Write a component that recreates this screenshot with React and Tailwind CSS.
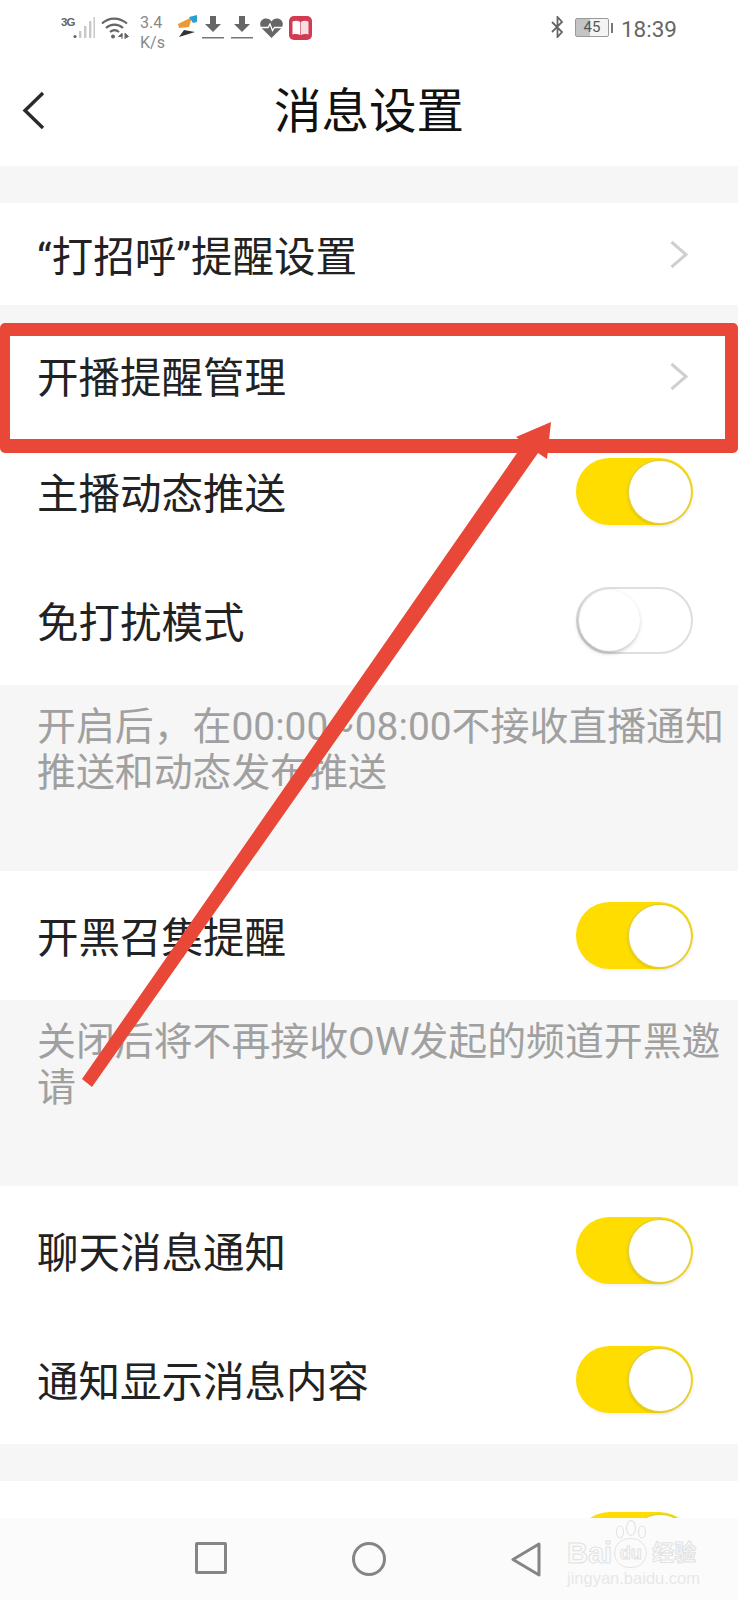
import React from "react";

const CJK = "font-['Roboto','Noto_Sans_CJK_SC',sans-serif]";

function Chevron() {
  return (
    <svg width="18" height="29" viewBox="0 0 18 29" fill="none" className="shrink-0">
      <path d="M1.5 2 L16 14.5 L1.5 27" stroke="#cfcfcf" strokeWidth="3" />
    </svg>
  );
}

function Toggle({ on = true }) {
  if (on) {
    return (
      <div className="flex h-[67px] w-[117px] shrink-0 items-center justify-end rounded-full bg-[#ffdd00] pr-[2px] shadow-[1px_2px_3px_rgba(0,0,0,0.06)]">
        <div className="h-[62px] w-[62px] rounded-full bg-white shadow-[0_0_0_1.5px_#e4cf35,-1px_2px_3px_rgba(120,100,0,0.25)]" />
      </div>
    );
  }
  return (
    <div className="flex h-[67px] w-[117px] shrink-0 items-center justify-start rounded-full border-2 border-[#dedede] bg-white pl-[1px]">
      <div className="h-[61px] w-[61px] rounded-full bg-white shadow-[-1px_2px_4px_rgba(0,0,0,0.28)]" />
    </div>
  );
}

function NavRow({ label, first }) {
  return (
    <div className="flex h-[102px] items-center justify-between bg-white pl-[37px] pr-[50px]">
      <span className={`text-[41.5px] leading-none text-[#222] ${first ? "pt-[8px]" : "pt-[6px]"}`}>{label}</span>
      <Chevron />
    </div>
  );
}

function SwitchRow({ label, on }) {
  return (
    <div className="flex h-[129px] items-center justify-between bg-white pl-[37px] pr-[45px]">
      <span className="pt-[6px] text-[41.5px] leading-none text-[#222]">{label}</span>
      <Toggle on={on} />
    </div>
  );
}

function Note({ children }) {
  return (
    <div className="h-[186px] bg-[#f6f6f6] pl-[37px] pr-[10px] pt-[19px] text-[38.9px] leading-[46px] text-[#a0a0a0]">
      {children}
    </div>
  );
}

function Download() {
  return (
    <svg width="22" height="24" viewBox="0 0 22 24" className="shrink-0">
      <path d="M8 0h6v8h5l-8 8-8-8h5z" fill="#666" />
      <rect x="0" y="21" width="22" height="1.5" fill="#777" />
    </svg>
  );
}

function StatusBar() {
  return (
    <div className="flex h-[60px] items-start pl-[61px] pr-[61px] pt-[13px] text-[#666]">
      <span className="mt-[3px] w-[12px] text-[11.5px] font-bold leading-[12px] tracking-[-0.8px] font-['Liberation_Sans',sans-serif]">3G</span>
      <svg width="22" height="24" viewBox="0 0 22 24" className="mt-[3px] shrink-0">
        <circle cx="2" cy="20.5" r="1.6" fill="#666" />
        <rect x="6" y="15" width="2.4" height="7" fill="#c8c8c8" />
        <rect x="11" y="10" width="2.4" height="12" fill="#c8c8c8" />
        <rect x="16" y="5" width="2.4" height="17" fill="#c8c8c8" />
        <rect x="20.5" y="1" width="1.5" height="21" fill="#c8c8c8" />
      </svg>
      <svg width="28" height="24" viewBox="0 0 28 24" fill="none" className="ml-[6px] mt-[4px] shrink-0">
        <path d="M1 6.5 C8 0 18 0 26 6.5" stroke="#666" strokeWidth="2.2" />
        <path d="M5 11 C10 6.5 17 6.5 22 11" stroke="#666" strokeWidth="2.2" />
        <path d="M9 15 C12 12.5 15 12.5 18 15" stroke="#666" strokeWidth="2.2" />
        <circle cx="12" cy="19.5" r="2" fill="#666" />
        <path d="M21 16.5 L17.5 19.5 L21 19.5 Z M21 16.5 V22" stroke="#666" strokeWidth="1" fill="#666" />
        <path d="M24 16 V22 M24.5 16.5 L27.5 19.5 L24.5 21 Z" stroke="#666" strokeWidth="1" fill="#666" />
      </svg>
      <div className="ml-[11px] flex w-[24px] shrink-0 flex-col text-[16px] leading-[20px] font-['Roboto',sans-serif] text-[#888]">
        <span>3.4</span>
        <span>K/s</span>
      </div>
      <svg width="20" height="24" viewBox="0 0 20 24" className="ml-[14px] mt-[2px] shrink-0">
        <path d="M0 9 L14 2 L11 12 L1 13 Z" fill="#ee9a33" />
        <path d="M11 2 L19 0 L19 7 L15 8 Z" fill="#2a9fd6" />
        <path d="M1 22 L6 15 L17 17 Z" fill="#333" />
      </svg>
      <div className="ml-[4px] mt-[3px] flex gap-[7px]">
        <Download />
        <Download />
      </div>
      <svg width="23" height="20" viewBox="0 0 23 20" className="ml-[7px] mt-[5px] shrink-0">
        <path d="M11.5 20 L1.5 10 C-1.5 6 1 0.5 6 0.5 C8.5 0.5 10.3 1.8 11.5 3.5 C12.7 1.8 14.5 0.5 17 0.5 C22 0.5 24.5 6 21.5 10 Z" fill="#666" />
        <path d="M1 9.5 H8 L10 6 L12.5 12.5 L14.5 9.5 H22" fill="none" stroke="#fff" strokeWidth="1.3" />
      </svg>
      <svg width="23" height="24" viewBox="0 0 23 24" className="ml-[6px] mt-[3px] shrink-0">
        <rect x="0" y="0" width="23" height="24" rx="5" fill="#d23c52" />
        <path d="M3.5 5.5 C6 4.5 9 4.5 11.2 6 V19 C9 17.8 6 17.8 3.5 18.5 Z" fill="#fff" />
        <path d="M19.5 5.5 C17 4.5 14 4.5 11.8 6 V19 C14 17.8 17 17.8 19.5 18.5 Z" fill="#f6dfe2" />
      </svg>
      <div className="flex-1" />
      <svg width="13" height="22" viewBox="0 0 13 22" fill="none" className="mt-[3px] shrink-0">
        <path d="M1 6 L11 16 L6.5 21 V1 L11 6 L1 16" stroke="#666" strokeWidth="1.8" />
      </svg>
      <div className="ml-[11px] mt-[5px] flex h-[19px] w-[34px] shrink-0 items-center justify-center rounded-[2px] border border-[#999] bg-[linear-gradient(90deg,#c4c4c4_0_45%,#f4f4f4_45%)] text-[15px] leading-none font-['Roboto',sans-serif] text-[#555]">
        45
      </div>
      <div className="ml-[2px] mt-[10px] h-[10px] w-[2px] shrink-0 bg-[#777]" />
      <span className="ml-[8px] mt-[3px] text-[22.5px] leading-[26px] font-['Roboto',sans-serif] text-[#666]">18:39</span>
    </div>
  );
}

function TitleBar() {
  return (
    <div className="relative flex h-[106px] items-center justify-center bg-white">
      <svg width="24" height="40" viewBox="0 0 24 40" fill="none" className="absolute left-[22px] top-[31px]">
        <path d="M21 2 L3 19.5 L21 37" stroke="#2a2a2a" strokeWidth="3.4" />
      </svg>
      <span className="text-[47.5px] leading-none text-[#111]">消息设置</span>
    </div>
  );
}

function BottomNav() {
  return (
    <div className="relative flex h-[82px] shrink-0 items-start bg-[#fbfbfb] pl-[195px] pt-[24px]">
      <div className="h-[32px] w-[32px] rounded-[2px] border-[3px] border-[#858585]" />
      <div className="ml-[125px] h-[34px] w-[34px] rounded-full border-[3px] border-[#858585]" />
      <svg width="30" height="35" viewBox="0 0 30 35" fill="none" className="ml-[125px] shrink-0">
        <path d="M28 2 L2 17.5 L28 33 Z" stroke="#858585" strokeWidth="3" strokeLinejoin="round" />
      </svg>
      <div className="absolute left-[567px] top-[2px] flex w-[131px] flex-col items-start">
        <svg width="44" height="24" viewBox="0 0 44 24" fill="none" className="absolute left-[42px] top-0">
          <ellipse cx="22" cy="8" rx="4.5" ry="7.5" stroke="#e4e4e4" strokeWidth="1.2" />
          <ellipse cx="11" cy="12" rx="3.5" ry="6" stroke="#e4e4e4" strokeWidth="1.2" />
          <ellipse cx="33" cy="12" rx="3.5" ry="6" stroke="#e4e4e4" strokeWidth="1.2" />
        </svg>
        <div className="mt-[18px] flex h-[30px] items-center font-['Liberation_Sans','Noto_Sans_CJK_SC',sans-serif] font-bold text-transparent [-webkit-text-stroke:1px_#e2e2e2]">
          <span className="text-[29px] leading-[30px]">Bai</span>
          <span className="ml-[2px] flex h-[30px] w-[33px] items-center justify-center rounded-full border border-[#e4e4e4] text-[18px] leading-none">du</span>
          <span className="ml-[5px] text-[22px] leading-none">经验</span>
        </div>
        <span className="mt-[1px] text-[16.5px] leading-[18px] font-['Liberation_Sans',sans-serif] text-[#e8e8e8]">jingyan.baidu.com</span>
      </div>
    </div>
  );
}

function Annotation() {
  return (
    <>
      <div className="pointer-events-none absolute left-0 top-[323px] h-[130px] w-[738px] rounded-[5px] border-b-[14px] border-l-[10px] border-r-[13px] border-t-[13px] border-[#e94737]" />
      <svg width="738" height="1600" viewBox="0 0 738 1600" className="pointer-events-none absolute left-0 top-0">
        <polygon points="82,1079 524,443 516,437 551,422 547,459 538,453 92,1087" fill="#e94737" />
      </svg>
    </>
  );
}

export default function App() {
  return (
    <div className={`relative flex h-[1600px] w-[738px] flex-col overflow-hidden bg-white ${CJK}`}>
      <div className="min-h-0 flex-1 overflow-hidden">
        <StatusBar />
        <TitleBar />
        <div className="h-[37px] bg-[#f6f6f6]" />
        <NavRow label="“打招呼”提醒设置" first />
        <div className="h-[20px] bg-[#f6f6f6]" />
        <NavRow label="开播提醒管理" />
        <SwitchRow label="主播动态推送" on />
        <SwitchRow label="免打扰模式" on={false} />
        <Note>开启后，在00:00~08:00不接收直播通知推送和动态发布推送</Note>
        <SwitchRow label="开黑召集提醒" on />
        <Note>关闭后将不再接收OW发起的频道开黑邀请</Note>
        <SwitchRow label="聊天消息通知" on />
        <SwitchRow label="通知显示消息内容" on />
        <div className="h-[37px] bg-[#f6f6f6]" />
        <SwitchRow label="" on />
      </div>
      <BottomNav />
      <Annotation />
    </div>
  );
}
